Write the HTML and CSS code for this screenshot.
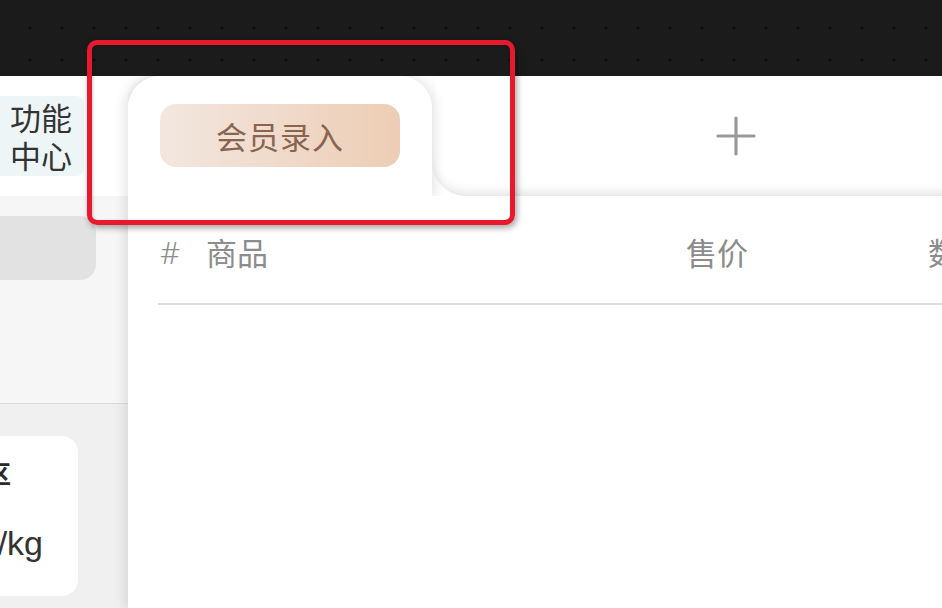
FILE: index.html
```html
<!DOCTYPE html>
<html lang="zh">
<head>
<meta charset="utf-8">
<link rel="stylesheet" href="styles.css">
</head>
<body>
<div class="screen">
  <div class="topbar"></div>
  <div class="main">
    <aside class="sidebar">
      <div class="side-head">
        <div class="func-btn"><div>功能</div><div>中心</div></div>
      </div>
      <div class="side-search">
        <div class="search-pill"></div>
      </div>
      <div class="side-list">
        <div class="card">
          <div class="card-line card-name"><span>称重区</span></div>
          <div class="card-line card-price"><span>¥12.80/kg</span></div>
        </div>
      </div>
    </aside>
    <section class="panel">
      <div class="tabbar">
        <div class="tab">
          <div class="member-btn">会员录入</div>
        </div>
        <div class="tab-rest">
          <svg class="plus" width="40" height="40" viewBox="0 0 40 40">
            <path d="M20 2 V38 M2 20 H38" stroke="#999" stroke-width="3.2" stroke-linecap="round" fill="none"/>
          </svg>
        </div>
      </div>
      <div class="table">
        <div class="thead">
          <span class="col-no">#</span>
          <span class="col-name">商品</span>
          <span class="col-price">售价</span>
          <span class="col-qty">数量</span>
        </div>
      </div>
    </section>
  </div>
  <div class="highlight"></div>
</div>
</body>
</html>
```
FILE: styles.css
```css
* { box-sizing: border-box; }
html, body { margin: 0; padding: 0; }
body {
  font-family: "Noto Sans CJK SC", "Noto Sans", sans-serif;
  background: #fff;
}
.screen {
  position: relative;
  width: 942px;
  height: 608px;
  overflow: hidden;
  display: flex;
  flex-direction: column;
}
.topbar {
  position: relative;
  z-index: 3;
  height: 76px;
  flex: none;
  background-color: #1b1b1b;
  background-image: radial-gradient(circle, #0c0c0c 1.3px, transparent 1.9px);
  background-size: 32px 32px;
  background-position: 14px 12px;
}
.main {
  flex: 1;
  display: flex;
  min-height: 0;
}
.sidebar {
  width: 128px;
  flex: none;
  display: flex;
  flex-direction: column;
  background: #f0f0f0;
}
.side-head {
  height: 120px;
  background: #fff;
  padding-top: 20px;
}
.func-btn {
  width: 84px;
  height: 80px;
  background: #edf5f7;
  border-radius: 0 8px 8px 0;
  color: #333;
  font-size: 31px;
  line-height: 38px;
  padding: 2px 0 0 10px;
}
.side-search {
  height: 208px;
  background: #f6f6f6;
  border-bottom: 1px solid #dcdcdc;
  padding-top: 20px;
}
.search-pill {
  width: 96px;
  height: 64px;
  background: #e2e2e2;
  border-radius: 0 16px 16px 0;
}
.side-list {
  flex: 1;
  background: #f0f0f0;
  padding-top: 32px;
}
.card {
  width: 78px;
  height: 160px;
  background: #fff;
  border-radius: 0 16px 16px 0;
  overflow: hidden;
  padding-top: 20px;
}
.card-line {
  display: flex;
  justify-content: flex-end;
  white-space: nowrap;
  color: #333;
}
.card-name {
  font-size: 24px;
  font-weight: 700;
  line-height: 34px;
  padding-right: 67px;
  color: #2a2a2a;
}
.card-price {
  margin-top: 34px;
  font-family: "Liberation Sans", Arial, sans-serif;
  font-size: 34px;
  line-height: 38px;
  padding-right: 35px;
  color: #333;
}
.panel {
  position: relative;
  z-index: 1;
  flex: 1;
  display: flex;
  flex-direction: column;
  background: #fff;
  border-top-left-radius: 32px;
  box-shadow: -4px 0 12px rgba(0, 0, 0, 0.10);
}
.tabbar {
  height: 120px;
  flex: none;
  display: flex;
}
.tab {
  position: relative;
  z-index: 2;
  width: 304px;
  flex: none;
  background: #fff;
  border-radius: 32px 32px 0 0;
  padding: 28px 0 0 32px;
  box-shadow: 3px 0 12px rgba(0, 0, 0, 0.11);
  clip-path: inset(0 -30px 0 0);
}
.member-btn {
  width: 240px;
  height: 63px;
  border-radius: 16px;
  background: linear-gradient(90deg, #f2e7e0 0%, #edcdb4 100%);
  color: #8a6450;
  font-size: 31px;
  line-height: 63px;
  text-align: center;
  letter-spacing: 1px;
}
.tab-rest {
  position: relative;
  z-index: 1;
  flex: 1;
  background: #fff;
  border-bottom-left-radius: 34px;
  box-shadow: inset 0 -10px 12px -7px rgba(0, 0, 0, 0.12);
  padding: 40px 0 0 284px;
}
.plus { display: block; }
.table {
  flex: 1;
  padding-left: 30px;
}
.thead {
  height: 109px;
  display: flex;
  align-items: center;
  padding: 4px 0 0 2px;
  border-bottom: 2px solid #dedede;
  color: #8c8c8c;
  font-size: 31px;
  white-space: nowrap;
}
.col-no {
  width: 46px;
  font-family: "Noto Sans", sans-serif;
  font-weight: 300;
  font-size: 31px;
  color: #8c8c8c;
}
.col-name { width: 480px; }
.col-price { width: 242px; }
.highlight {
  position: absolute;
  left: 87px;
  top: 40px;
  width: 428px;
  height: 185px;
  border: 5px solid #e8192c;
  border-radius: 10px;
  box-shadow: 2px 3px 6px rgba(0, 0, 0, 0.35), inset 1px 1px 3px rgba(0, 0, 0, 0.2);
  z-index: 5;
}
```
